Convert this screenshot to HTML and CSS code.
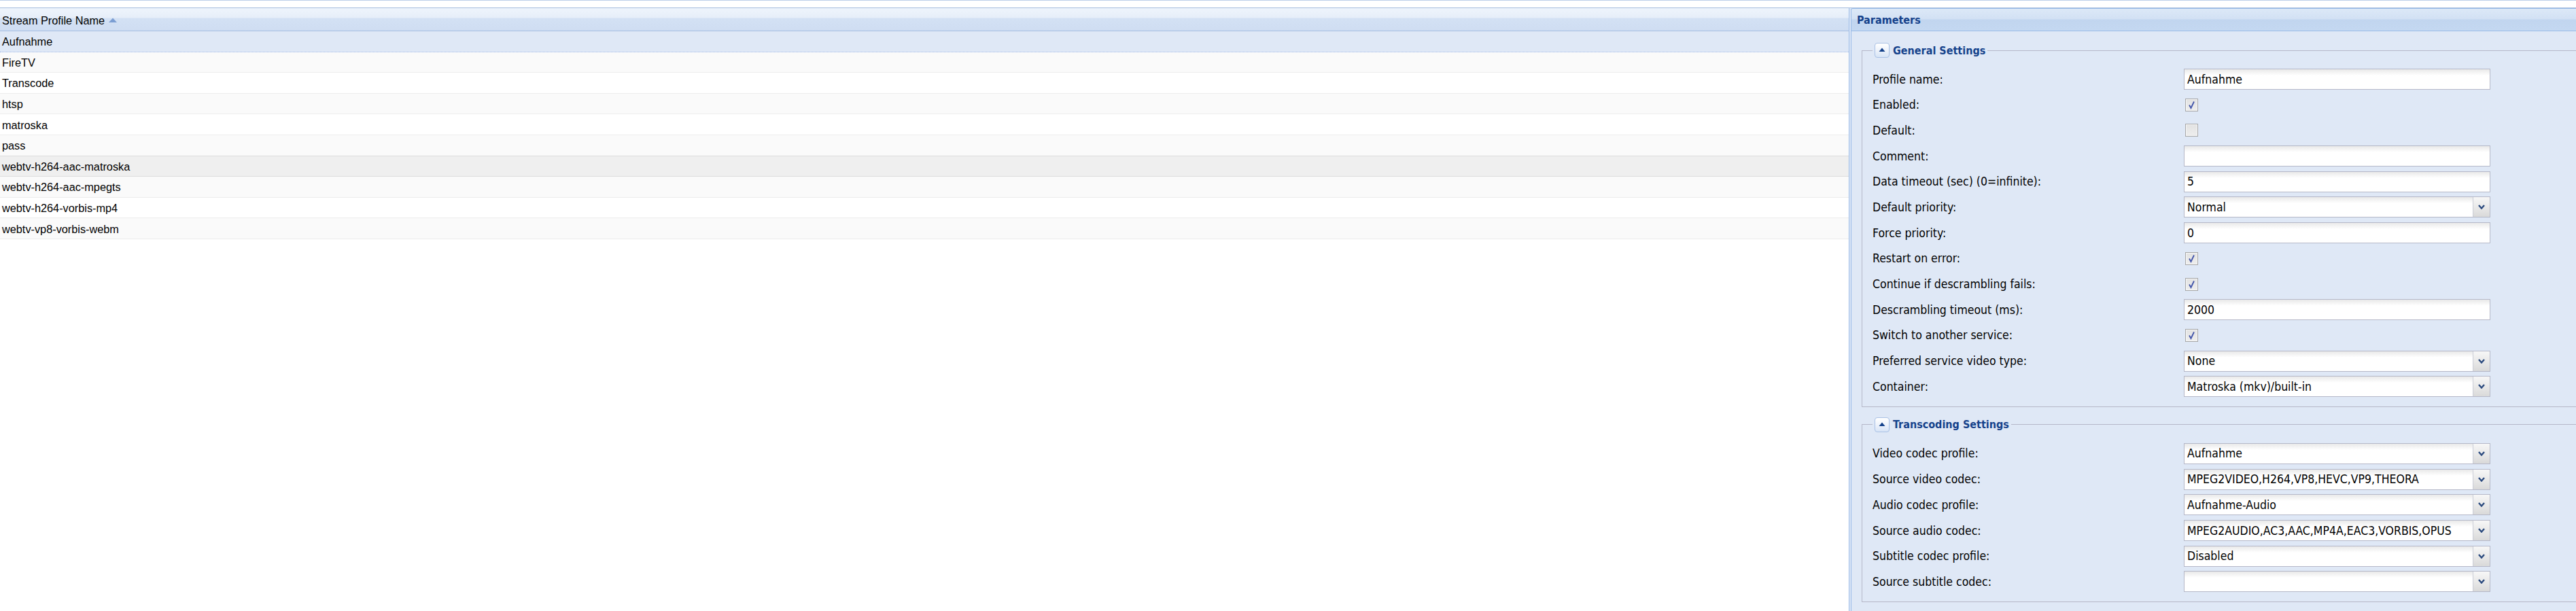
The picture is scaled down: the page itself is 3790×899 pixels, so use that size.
FILE: index.html
```html
<!DOCTYPE html>
<html lang="de">
<head>
<meta charset="utf-8">
<title>Stream Profiles</title>
<link rel="stylesheet" href="styles.css">
</head>
<body>
<div class="top-strip"></div>
<div class="main">
  <div class="grid">
    <div class="grid-header">
      <div class="hd-cell"><span>Stream Profile Name</span><svg class="sort" width="12" height="7" viewBox="0 0 12 7"><path d="M0 7 L6 0.5 L12 7 Z" fill="#7b9ed3"/></svg></div>
    </div>
    <div class="grid-body">
      <div class="g-row selected">Aufnahme</div>
      <div class="g-row alt">FireTV</div>
      <div class="g-row">Transcode</div>
      <div class="g-row alt">htsp</div>
      <div class="g-row">matroska</div>
      <div class="g-row alt">pass</div>
      <div class="g-row hover">webtv-h264-aac-matroska</div>
      <div class="g-row alt">webtv-h264-aac-mpegts</div>
      <div class="g-row">webtv-h264-vorbis-mp4</div>
      <div class="g-row alt">webtv-vp8-vorbis-webm</div>
    </div>
  </div>
  <div class="panel">
    <div class="panel-header">Parameters</div>
    <div class="panel-body">
      <fieldset class="fs">
        <legend>
          <span class="legend-inner">
            <span class="tool"><svg width="10" height="6" viewBox="0 0 10 6"><path d="M0.5 6 L5 0.5 L9.5 6 Z" fill="#15428b"/></svg></span>
            <span class="legend-text">General Settings</span>
          </span>
        </legend>
        <div class="f-row"><span class="lbl">Profile name:</span><div class="text">Aufnahme</div></div>
        <div class="f-row"><span class="lbl">Enabled:</span><span class="cb checked"><svg width="13" height="13" viewBox="0 0 13 13"><path d="M3 6.5 L5.5 11 L10 1.5" fill="none" stroke="#3f52a8" stroke-width="1.8"/></svg></span></div>
        <div class="f-row"><span class="lbl">Default:</span><span class="cb"></span></div>
        <div class="f-row"><span class="lbl">Comment:</span><div class="text"></div></div>
        <div class="f-row"><span class="lbl">Data timeout (sec) (0=infinite):</span><div class="text">5</div></div>
        <div class="f-row"><span class="lbl">Default priority:</span><div class="combo"><span class="combo-val">Normal</span><span class="trigger"><svg width="10" height="7" viewBox="0 0 10 7"><path d="M1 1 L5 5.5 L9 1" fill="none" stroke="#2b4a7e" stroke-width="2.4"/></svg></span></div></div>
        <div class="f-row"><span class="lbl">Force priority:</span><div class="text">0</div></div>
        <div class="f-row"><span class="lbl">Restart on error:</span><span class="cb checked"><svg width="13" height="13" viewBox="0 0 13 13"><path d="M3 6.5 L5.5 11 L10 1.5" fill="none" stroke="#3f52a8" stroke-width="1.8"/></svg></span></div>
        <div class="f-row"><span class="lbl">Continue if descrambling fails:</span><span class="cb checked"><svg width="13" height="13" viewBox="0 0 13 13"><path d="M3 6.5 L5.5 11 L10 1.5" fill="none" stroke="#3f52a8" stroke-width="1.8"/></svg></span></div>
        <div class="f-row"><span class="lbl">Descrambling timeout (ms):</span><div class="text">2000</div></div>
        <div class="f-row"><span class="lbl">Switch to another service:</span><span class="cb checked"><svg width="13" height="13" viewBox="0 0 13 13"><path d="M3 6.5 L5.5 11 L10 1.5" fill="none" stroke="#3f52a8" stroke-width="1.8"/></svg></span></div>
        <div class="f-row"><span class="lbl">Preferred service video type:</span><div class="combo"><span class="combo-val">None</span><span class="trigger"><svg width="10" height="7" viewBox="0 0 10 7"><path d="M1 1 L5 5.5 L9 1" fill="none" stroke="#2b4a7e" stroke-width="2.4"/></svg></span></div></div>
        <div class="f-row"><span class="lbl">Container:</span><div class="combo"><span class="combo-val">Matroska (mkv)/built-in</span><span class="trigger"><svg width="10" height="7" viewBox="0 0 10 7"><path d="M1 1 L5 5.5 L9 1" fill="none" stroke="#2b4a7e" stroke-width="2.4"/></svg></span></div></div>
      </fieldset>
      <fieldset class="fs fs2">
        <legend>
          <span class="legend-inner">
            <span class="tool"><svg width="10" height="6" viewBox="0 0 10 6"><path d="M0.5 6 L5 0.5 L9.5 6 Z" fill="#15428b"/></svg></span>
            <span class="legend-text">Transcoding Settings</span>
          </span>
        </legend>
        <div class="f-row"><span class="lbl">Video codec profile:</span><div class="combo"><span class="combo-val">Aufnahme</span><span class="trigger"><svg width="10" height="7" viewBox="0 0 10 7"><path d="M1 1 L5 5.5 L9 1" fill="none" stroke="#2b4a7e" stroke-width="2.4"/></svg></span></div></div>
        <div class="f-row"><span class="lbl">Source video codec:</span><div class="combo"><span class="combo-val">MPEG2VIDEO,H264,VP8,HEVC,VP9,THEORA</span><span class="trigger"><svg width="10" height="7" viewBox="0 0 10 7"><path d="M1 1 L5 5.5 L9 1" fill="none" stroke="#2b4a7e" stroke-width="2.4"/></svg></span></div></div>
        <div class="f-row"><span class="lbl">Audio codec profile:</span><div class="combo"><span class="combo-val">Aufnahme-Audio</span><span class="trigger"><svg width="10" height="7" viewBox="0 0 10 7"><path d="M1 1 L5 5.5 L9 1" fill="none" stroke="#2b4a7e" stroke-width="2.4"/></svg></span></div></div>
        <div class="f-row"><span class="lbl">Source audio codec:</span><div class="combo"><span class="combo-val">MPEG2AUDIO,AC3,AAC,MP4A,EAC3,VORBIS,OPUS</span><span class="trigger"><svg width="10" height="7" viewBox="0 0 10 7"><path d="M1 1 L5 5.5 L9 1" fill="none" stroke="#2b4a7e" stroke-width="2.4"/></svg></span></div></div>
        <div class="f-row"><span class="lbl">Subtitle codec profile:</span><div class="combo"><span class="combo-val">Disabled</span><span class="trigger"><svg width="10" height="7" viewBox="0 0 10 7"><path d="M1 1 L5 5.5 L9 1" fill="none" stroke="#2b4a7e" stroke-width="2.4"/></svg></span></div></div>
        <div class="f-row"><span class="lbl">Source subtitle codec:</span><div class="combo"><span class="combo-val"></span><span class="trigger"><svg width="10" height="7" viewBox="0 0 10 7"><path d="M1 1 L5 5.5 L9 1" fill="none" stroke="#2b4a7e" stroke-width="2.4"/></svg></span></div></div>
      </fieldset>
    </div>
  </div>
</div>
</body>
</html>
```

FILE: styles.css
```css
html, body {
  margin: 0;
  padding: 0;
  width: 3790px;
  height: 899px;
  overflow: hidden;
  background: #dfe8f6;
}

.top-strip {
  height: 10px;
  background: #ffffff;
  border-top: 1px solid #bccfe9;
  border-bottom: 1px solid #a6bedf;
}

.main {
  display: flex;
  height: 887px;
}

/* ---------- grid ---------- */
.grid {
  width: 2721px;
  flex: none;
  box-sizing: border-box;
  border-right: 1px solid #99bbe8;
  background: #ffffff;
  margin-right: 2px;
  font-family: "Liberation Sans", Arial, sans-serif;
  font-size: 16.3px;
  color: #000;
}

.grid-header {
  height: 33px;
  border-bottom: 1px solid #a4bde2;
  background: linear-gradient(to bottom, #eef4fc 0, #e6eef9 14px, #d3e1f4 15px, #cfddf2 100%);
}

.hd-cell {
  display: flex;
  align-items: center;
  height: 33px;
  padding: 3px 0 0 3px;
  box-sizing: border-box;
  white-space: nowrap;
}

.sort {
  margin-left: 6px;
  margin-top: -1px;
}

.g-row {
  height: 30.6px;
  box-sizing: border-box;
  border-bottom: 1px solid #ededed;
  padding: 2px 0 0 3px;
  display: flex;
  align-items: center;
  background: #ffffff;
}

.g-row.alt {
  background: #fafafa;
}

.g-row.selected {
  background: #dfe8f6;
  border-bottom: 1px dotted #a3bae9;
}

.g-row.hover {
  background: #efefef;
  border-top: 1px solid #dddddd;
  border-bottom: 1px solid #dddddd;
  margin-top: -1px;
  height: 31.6px;
}

/* ---------- panel ---------- */
.panel {
  flex: 1;
  min-width: 0;
  border-left: 1px solid #99bbe8;
  border-top: 1px solid #99bbe8;
  border-top-left-radius: 3px;
  overflow: hidden;
  background: #dfe8f6;
  font-family: "DejaVu Sans Condensed", "DejaVu Sans", Tahoma, sans-serif;
  font-stretch: semi-condensed;
}

.panel-header {
  height: 32px;
  border-bottom: 1px solid #99bbe8;
  background: linear-gradient(to bottom, #dce8f7 0, #d2e1f4 15px, #c1d5ef 16px, #c4d8f1 100%);
  color: #15428b;
  font-weight: bold;
  font-size: 16px;
  display: flex;
  align-items: center;
  padding-left: 8px;
}

.panel-body {
  padding: 17px 0 0 15px;
}

.fs {
  margin: 0 -80px 0 0;
  border: 1px solid #b5b8c8;
  padding: 16px 0 7px 15px;
}

.fs2 {
  margin-top: 15px;
}

legend {
  padding: 0 3px;
}

.legend-inner {
  display: flex;
  align-items: center;
  gap: 5px;
  height: 22px;
}

.tool {
  width: 22px;
  height: 22px;
  box-sizing: border-box;
  border: 1px solid #a9c1e5;
  border-radius: 4px;
  background: linear-gradient(to bottom, #ffffff 0, #eef3fb 50%, #d7e4f6 100%);
  display: flex;
  align-items: center;
  justify-content: center;
  padding-bottom: 2px;
}

.legend-text {
  color: #15428b;
  font-weight: bold;
  font-size: 16px;
}

.f-row {
  display: flex;
  align-items: center;
  height: 31px;
  margin-bottom: 6.7px;
  font-size: 17.5px;
  color: #000;
}

.lbl {
  width: 458px;
  flex: none;
  white-space: nowrap;
}

.text, .combo {
  width: 451px;
  height: 31px;
  box-sizing: border-box;
  border: 1px solid #b5b8c8;
  background: linear-gradient(to bottom, #e9e9e9 0, #ffffff 9px, #ffffff 100%);
  display: flex;
  align-items: center;
}

.text {
  padding-left: 4px;
}

.combo-val {
  flex: 1;
  padding-left: 4px;
  white-space: nowrap;
  overflow: hidden;
}

.trigger {
  width: 25px;
  height: 29px;
  flex: none;
  box-sizing: border-box;
  border-left: 1px solid #c9ccd6;
  background: linear-gradient(to bottom, #f7f7f7 0, #e9e9e9 50%, #d9d9d9 100%);
  display: flex;
  align-items: center;
  justify-content: center;
}

.cb {
  width: 19px;
  height: 19px;
  box-sizing: border-box;
  margin-left: 2px;
  border: 1px solid #a6a6a6;
  background: linear-gradient(to bottom, #e2e2e2 0, #eeeeee 100%);
  box-shadow: inset 0 0 0 1px #f6f6f6;
  display: flex;
  align-items: center;
  justify-content: center;
}
```
